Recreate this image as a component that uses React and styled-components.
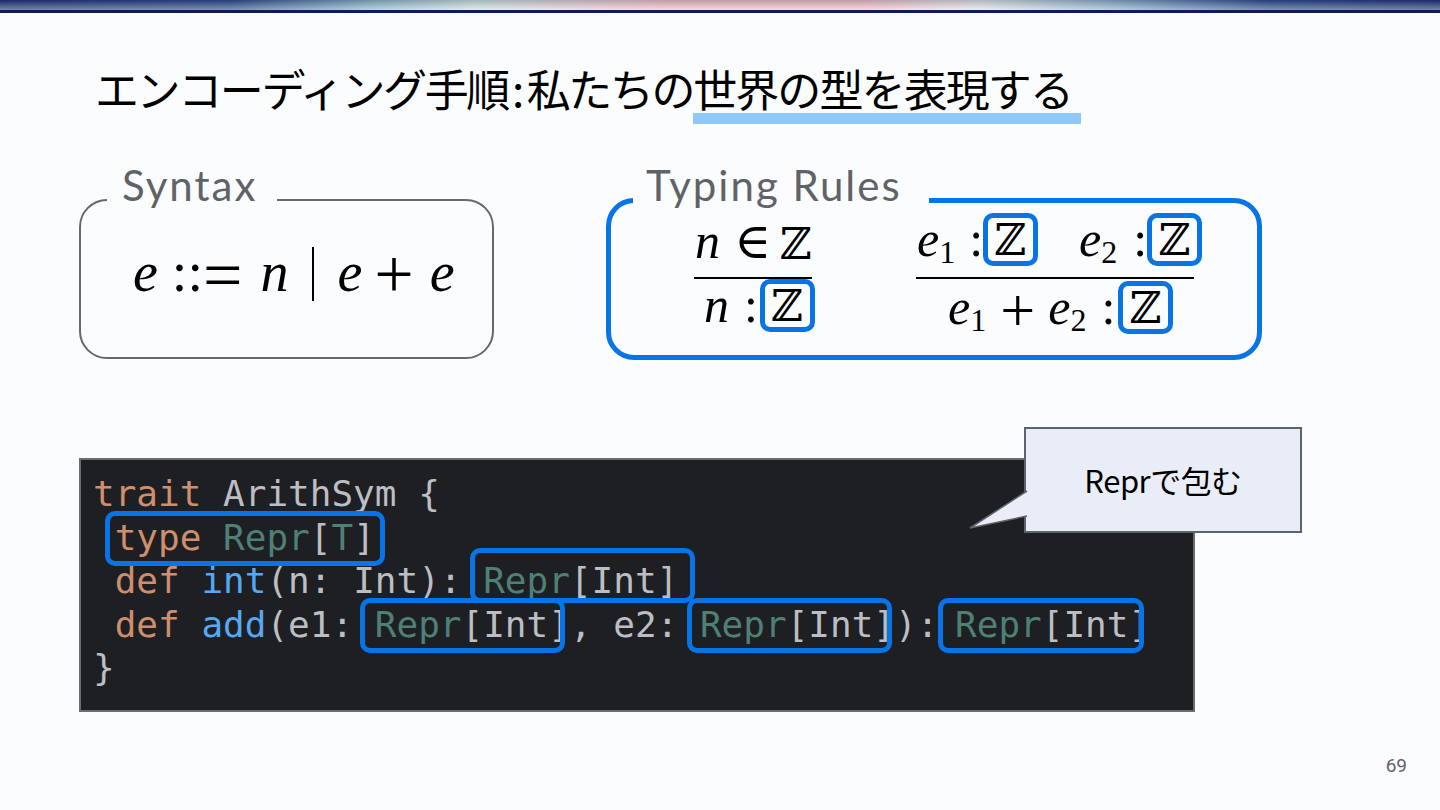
import React from "react"
import styled, { createGlobalStyle } from "styled-components"

const GlobalStyle = createGlobalStyle`
  html, body {
    margin: 0;
    padding: 0;
    background: #fbfcfe;
  }
`

const MONO = `"DejaVu Sans Mono", "Liberation Mono", monospace`
const MATH = `"Liberation Serif", "DejaVu Serif", serif`
const BLUE = "#0874e6"

const App = () => (
  <Slide>
    <GlobalStyle />
    <TopBar />
    <Title>
      エンコーディング手順<Colon>:</Colon>私たちの
      <Marked>世界の型を表現する</Marked>
    </Title>

    <Panels>
      <Panel $width={415}>
        <Legend>Syntax</Legend>
        <Grammar>
          <I>e</I>
          <Op $gap={14}>::<Big $size={70} $drop={8}>=</Big></Op>
          <I $gap={18}>n</I>
          <Bar />
          <I>e</I>
          <Op $gap={12}><Big $size={70} $drop={7}>+</Big></Op>
          <I $gap={16}>e</I>
        </Grammar>
      </Panel>

      <Panel $width={656} $active>
        <Legend $active>Typing Rules</Legend>
        <Rules>
          <Rule $width={118}>
            <Premise $indent={1} $drop={2}>
              <I>n</I>
              <Op $gap={14}>∈</Op>
              <Zed $gap={9}>ℤ</Zed>
            </Premise>
            <Conclusion $indent={10}>
              <I>n</I>
              <Op $gap={15}>:</Op>
              <ZedBox $gap={2}>ℤ</ZedBox>
            </Conclusion>
          </Rule>
          <Rule $width={278}>
            <Premise $indent={1}>
              <I>e</I><Sub>1</Sub>
              <Op $gap={14}>:</Op>
              <ZedBox>ℤ</ZedBox>
              <I $gap={41}>e</I><Sub>2</Sub>
              <Op $gap={16}>:</Op>
              <ZedBox>ℤ</ZedBox>
            </Premise>
            <Conclusion $indent={32} $top={2}>
              <I>e</I><Sub>1</Sub>
              <Op $gap={14}><Big $size={62} $drop={7}>+</Big></Op>
              <I $gap={13}>e</I><Sub>2</Sub>
              <Op $gap={15}>:</Op>
              <ZedBox $gap={3}>ℤ</ZedBox>
            </Conclusion>
          </Rule>
        </Rules>
      </Panel>
    </Panels>

    <CodeArea>
      <Code>
        <Line><Kw>trait</Kw> ArithSym {"{"}</Line>
        <Line>{" "}<Hl $l={10} $r={10}><Kw>type</Kw> <Ty>Repr</Ty>[<Ty>T</Ty>]</Hl></Line>
        <Line>{" "}<Kw>def</Kw> <Fn>int</Fn>(n: Int): <Hl $l={13} $r={17} $y={-6}><Ty>Repr</Ty>[Int]</Hl></Line>
        <Line>
          {" "}<Kw>def</Kw> <Fn>add</Fn>(e1: <Hl $l={15} $r={-5}><Ty>Repr</Ty>[Int]</Hl>, e2: <Hl $l={13} $r={-3}><Ty>Repr</Ty>[Int]</Hl>):<LastGap> </LastGap><Hl $l={17} $r={-6}><Ty>Repr</Ty>[Int]</Hl>
        </Line>
        <Line>{"}"}</Line>
      </Code>
      <Callout>
        <Tail viewBox="0 0 60 50" aria-hidden="true">
          <path d="M59 0 L2 37 L59 25" fill="#e8edf7" stroke="#5f6368" strokeWidth="1.5" />
        </Tail>
        Reprで包む
      </Callout>
    </CodeArea>

    <PageNumber>69</PageNumber>
  </Slide>
)

const Slide = styled.div`
  width: 1440px;
  height: 810px;
  display: flex;
  flex-direction: column;
  overflow: hidden;
  background: #fbfcfe;
`

const TopBar = styled.div`
  height: 10px;
  flex: none;
  border-bottom: 3px solid #0e1c58;
  background:
    linear-gradient(180deg, rgba(10, 20, 70, 0.22), rgba(255, 255, 255, 0.4)),
    linear-gradient(
      90deg,
      #1c3070 0%,
      #2c4a86 16%,
      #8fb8c6 26%,
      #cde4dc 33%,
      #f6c0c2 46%,
      #f6c0c2 60%,
      #e2e6e2 68%,
      #8eb2c8 77%,
      #2c4a86 88%,
      #1c3070 100%
    );
`

const Title = styled.h1`
  margin: 50px 0 0 95px;
  font-family: "Noto Sans CJK JP", sans-serif;
  font-size: 44px;
  line-height: 50px;
  font-weight: 400;
  color: #000;
  letter-spacing: -2.4px;
  white-space: nowrap;
  align-self: flex-start;
`

const Colon = styled.span`
  margin: 0 5px 0 4px;
`

const Marked = styled.span`
  display: inline-block;
  padding-right: 9px;
  letter-spacing: -1.9px;
  line-height: 50px;
  height: 61px;
  box-sizing: border-box;
  border-bottom: 11px solid #90c8fa;
`

const Panels = styled.div`
  display: flex;
  align-items: center;
  gap: 112px;
  margin: 74px 0 0 79px;
`

const Panel = styled.section`
  position: relative;
  box-sizing: border-box;
  width: ${(p) => p.$width}px;
  height: ${(p) => (p.$active ? "162px" : "160px")};
  border: ${(p) => (p.$active ? `5px solid ${BLUE}` : "2px solid #66696c")};
  border-radius: 28px;
`

const Legend = styled.h2`
  position: absolute;
  top: ${(p) => (p.$active ? "-42px" : "-40px")};
  left: ${(p) => (p.$active ? "22px" : "26px")};
  margin: 0;
  padding: ${(p) => (p.$active ? "0 27px 0 13px" : "0 20px 0 15px")};
  background: #fbfcfe;
  font-family: Lato, sans-serif;
  font-size: 42px;
  line-height: 48px;
  font-weight: 400;
  letter-spacing: 2px;
  color: #5f6368;
`

const Grammar = styled.div`
  display: flex;
  align-items: center;
  height: 100%;
  box-sizing: border-box;
  padding: 0 0 14px 52px;
  font-family: ${MATH};
  font-size: 56px;
  color: #000;
`

const I = styled.span`
  font-style: italic;
  margin-left: ${(p) => p.$gap || 0}px;
`

const Op = styled.span`
  margin-left: ${(p) => p.$gap || 0}px;
`

const Big = styled.span`
  font-size: ${(p) => p.$size}px;
  line-height: 0;
  vertical-align: ${(p) => -p.$drop}px;
`

const Bar = styled.span`
  width: 2px;
  height: 54px;
  margin: 4px 23px 0 24px;
  background: #000;
`

const Sub = styled.span`
  font-size: 32px;
  margin-top: 13px;
`

const Rules = styled.div`
  display: flex;
  align-items: flex-start;
  gap: 104px;
  padding: 10px 0 0 83px;
  font-family: ${MATH};
  font-size: 50px;
  line-height: 53px;
  color: #000;
`

const Rule = styled.div`
  width: ${(p) => p.$width}px;
  display: flex;
  flex-direction: column;
`

const Premise = styled.div`
  height: 66px;
  box-sizing: border-box;
  display: flex;
  align-items: flex-start;
  border-bottom: 2px solid #000;
  padding-top: ${(p) => p.$drop || 0}px;
  padding-left: ${(p) => p.$indent}px;
  white-space: nowrap;
`

const Conclusion = styled.div`
  display: flex;
  align-items: flex-start;
  height: 53px;
  margin-top: ${(p) => p.$top || 0}px;
  padding-left: ${(p) => p.$indent}px;
  white-space: nowrap;
`

const Zed = styled.span`
  margin-left: ${(p) => p.$gap || 0}px;
  margin-top: 2px;
  font-family: "DejaVu Serif", serif;
  font-size: 44px;
`

const ZedBox = styled.span`
  flex: none;
  box-sizing: border-box;
  display: flex;
  align-items: center;
  justify-content: center;
  width: 55px;
  height: 53px;
  margin-left: ${(p) => p.$gap || 0}px;
  border: 5px solid ${BLUE};
  border-radius: 10px;
  font-family: "DejaVu Serif", serif;
  font-size: 44px;
`

const CodeArea = styled.div`
  position: relative;
  width: 1116px;
  margin: 98px 0 0 79px;
`

const Code = styled.pre`
  box-sizing: border-box;
  height: 254px;
  margin: 0;
  padding: 12px 0 0 12px;
  background: #1e1f22;
  border: 2px solid #6a6d70;
  font-family: ${MONO};
  font-size: 36px;
  line-height: 43.6px;
  color: #bcbec4;
  overflow: hidden;
`

const Line = styled.div`
  height: 43.6px;
  white-space: pre;
`

const LastGap = styled.span`
  margin-right: -5px;
`

const Kw = styled.span`
  color: #cf8e6d;
`

const Ty = styled.span`
  color: #4f8076;
`

const Fn = styled.span`
  color: #56a8f5;
`

const Hl = styled.span`
  position: relative;

  &::after {
    content: "";
    position: absolute;
    top: ${(p) => -6 + (p.$y || 0)}px;
    bottom: ${(p) => -8 - (p.$y || 0)}px;
    left: ${(p) => -p.$l}px;
    right: ${(p) => -p.$r}px;
    border: 5px solid ${BLUE};
    border-radius: 10px;
  }
`

const Callout = styled.div`
  position: absolute;
  top: -31px;
  left: 945px;
  box-sizing: border-box;
  width: 278px;
  height: 106px;
  display: flex;
  align-items: center;
  justify-content: center;
  padding-bottom: 2px;
  background: #e8edf7;
  border: 2px solid #5f6368;
  font-family: "Noto Sans CJK JP", sans-serif;
  font-size: 31px;
  letter-spacing: -0.5px;
  color: #000;
`

const Tail = styled.svg`
  position: absolute;
  left: -58px;
  top: 62px;
  width: 60px;
  height: 50px;
  overflow: visible;
`

const PageNumber = styled.div`
  align-self: flex-end;
  margin: 42px 33px 0 0;
  font-family: Roboto, sans-serif;
  font-size: 19px;
  line-height: 24px;
  color: #5f6368;
`

export default App
